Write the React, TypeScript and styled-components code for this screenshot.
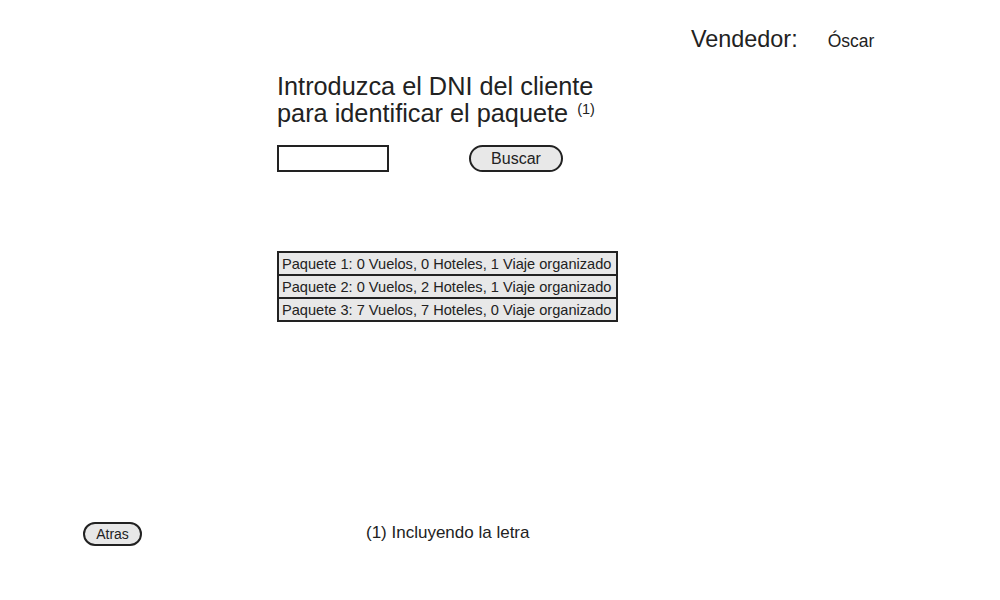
import styled, { createGlobalStyle } from "styled-components";

const GlobalStyle = createGlobalStyle`
  html, body {
    margin: 0;
    padding: 0;
    background: #ffffff;
  }
  body {
    font-family: "Liberation Sans", Arial, sans-serif;
    color: #222222;
  }
`;

const Page = styled.div`
  width: 1000px;
  height: 600px;
  display: flex;
  flex-direction: column;
  overflow: hidden;
`;

const Header = styled.div`
  display: flex;
  align-items: baseline;
  gap: 30px;
  padding: 26px 0 0 691px;
`;

const SellerLabel = styled.span`
  font-size: 23.4px;
`;

const SellerName = styled.span`
  font-size: 17.5px;
`;

const Main = styled.div`
  display: flex;
  flex-direction: column;
  padding-left: 277px;
  margin-top: 20px;
`;

const Title = styled.h2`
  margin: 0;
  font-size: 25.3px;
  font-weight: normal;
  line-height: 27px;
`;

const Sup = styled.sup`
  font-size: 14.5px;
  vertical-align: 8px;
  line-height: 0;
  margin-left: 2px;
`;

const SearchRow = styled.div`
  display: flex;
  align-items: center;
  gap: 80px;
  margin-top: 18px;
`;

const DniInput = styled.input`
  box-sizing: border-box;
  width: 112px;
  height: 27px;
  border: 2px solid #222222;
  border-radius: 0;
  padding: 0 4px;
  font-family: inherit;
  font-size: 15px;
  outline: none;
`;

const PillButton = styled.button<{ $small?: boolean }>`
  box-sizing: border-box;
  width: ${(p) => (p.$small ? "59px" : "94px")};
  height: ${(p) => (p.$small ? "24px" : "27px")};
  border: 2px solid #222222;
  border-radius: 14px;
  background: #e8e8e8;
  color: #222222;
  font-family: inherit;
  font-size: ${(p) => (p.$small ? "14px" : "16px")};
  padding: 0;
  cursor: pointer;
`;

const PackageList = styled.ul`
  box-sizing: border-box;
  list-style: none;
  margin: 79px 0 0;
  padding: 0;
  width: 341px;
  border: 2px solid #222222;
`;

const PackageItem = styled.li`
  height: 21px;
  line-height: 22px;
  padding-left: 3px;
  background: #e8e8e8;
  font-size: 14.6px;
  white-space: nowrap;

  & + & {
    border-top: 2px solid #222222;
  }
`;

const Footer = styled.div`
  display: flex;
  align-items: center;
  gap: 224px;
  padding-left: 83px;
  margin-top: 200px;
`;

const Footnote = styled.span`
  font-size: 17px;
  margin-top: -3px;
`;

const packages = [
  "Paquete 1: 0 Vuelos, 0 Hoteles, 1 Viaje organizado",
  "Paquete 2: 0 Vuelos, 2 Hoteles, 1 Viaje organizado",
  "Paquete 3: 7 Vuelos, 7 Hoteles, 0 Viaje organizado",
];

export default function App() {
  return (
    <>
      <GlobalStyle />
      <Page>
        <Header>
          <SellerLabel>Vendedor:</SellerLabel>
          <SellerName>Óscar</SellerName>
        </Header>
        <Main>
          <Title>
            Introduzca el DNI del cliente
            <br />
            para identificar el paquete <Sup>(1)</Sup>
          </Title>
          <SearchRow>
            <DniInput type="text" />
            <PillButton>Buscar</PillButton>
          </SearchRow>
          <PackageList>
            {packages.map((p) => (
              <PackageItem key={p}>{p}</PackageItem>
            ))}
          </PackageList>
        </Main>
        <Footer>
          <PillButton $small>Atras</PillButton>
          <Footnote>(1) Incluyendo la letra</Footnote>
        </Footer>
      </Page>
    </>
  );
}
